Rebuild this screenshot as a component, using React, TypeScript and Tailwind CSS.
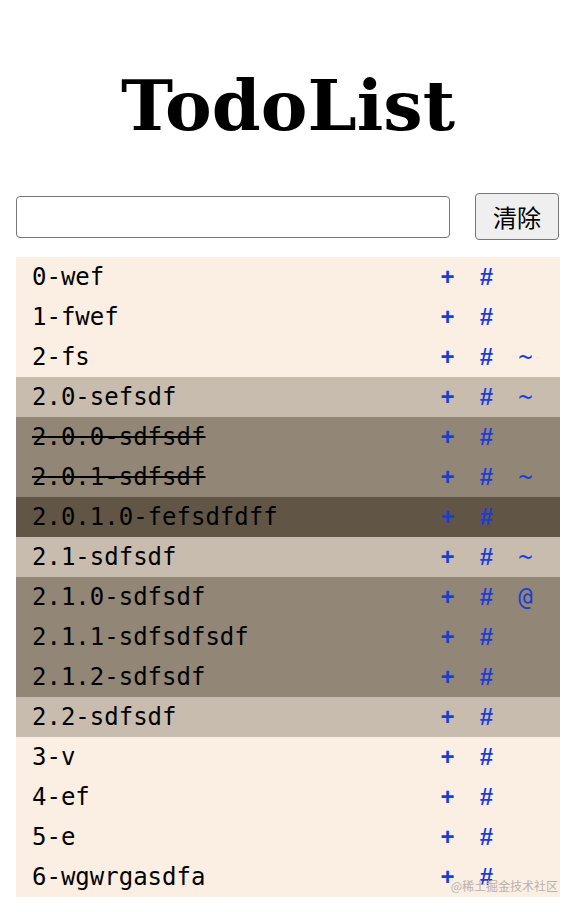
const levels = ['bg-[#fbeee2]', 'bg-[#c8bcae]', 'bg-[#928677]', 'bg-[#615546]'];

type Item = { label: string; level: number; done?: boolean; extra?: string };

const items: Item[] = [
  { label: '0-wef', level: 0 },
  { label: '1-fwef', level: 0 },
  { label: '2-fs', level: 0, extra: '~' },
  { label: '2.0-sefsdf', level: 1, extra: '~' },
  { label: '2.0.0-sdfsdf', level: 2, done: true },
  { label: '2.0.1-sdfsdf', level: 2, done: true, extra: '~' },
  { label: '2.0.1.0-fefsdfdff', level: 3 },
  { label: '2.1-sdfsdf', level: 1, extra: '~' },
  { label: '2.1.0-sdfsdf', level: 2, extra: '@' },
  { label: '2.1.1-sdfsdfsdf', level: 2 },
  { label: '2.1.2-sdfsdf', level: 2 },
  { label: '2.2-sdfsdf', level: 1 },
  { label: '3-v', level: 0 },
  { label: '4-ef', level: 0 },
  { label: '5-e', level: 0 },
  { label: '6-wgwrgasdfa', level: 0 },
];

const Row = ({ item }: { item: Item }) => (
  <li className={`flex h-10 items-center pl-4 pr-[15px] ${levels[item.level]}`}>
    <span className={`flex-1 text-black ${item.done ? 'line-through' : ''}`}>{item.label}</span>
    <span className="w-[39px] text-center font-['Liberation_Sans',sans-serif] font-bold text-[#1a3cdc]">+</span>
    <span className="w-[39px] text-center font-['Liberation_Sans',sans-serif] font-bold text-[#1a3cdc]">#</span>
    <span className="w-[39px] text-center text-[#1a3cdc]">{item.extra ?? ''}</span>
  </li>
);

export default function App() {
  return (
    <div className="relative flex min-h-[912px] w-full flex-col bg-white px-4 pt-[71px]">
      <h1 className="text-center font-['DejaVu_Serif',serif] text-[70px] font-bold leading-none text-black">
        TodoList
      </h1>
      <div className="mt-[52px] flex h-[47px] items-center gap-[25px]">
        <input
          type="text"
          className="h-[42px] w-[434px] rounded-[4px] border border-[#767676] bg-white px-2 outline-none"
        />
        <button className="h-[47px] w-[84px] rounded-[4px] border border-[#767676] bg-[#efefef] font-['Noto_Sans_CJK_SC',sans-serif] text-[24px] leading-none text-black">
          清除
        </button>
      </div>
      <ul className="mt-[17px] font-['DejaVu_Sans_Mono',monospace] text-[24px] leading-none">
        {items.map((item) => (
          <Row key={item.label} item={item} />
        ))}
      </ul>
      <div className="absolute right-[18px] top-[880px] font-['Noto_Sans_CJK_SC',sans-serif] text-[12px] leading-none text-[#b8b2ac]">
        @稀土掘金技术社区
      </div>
    </div>
  );
}
